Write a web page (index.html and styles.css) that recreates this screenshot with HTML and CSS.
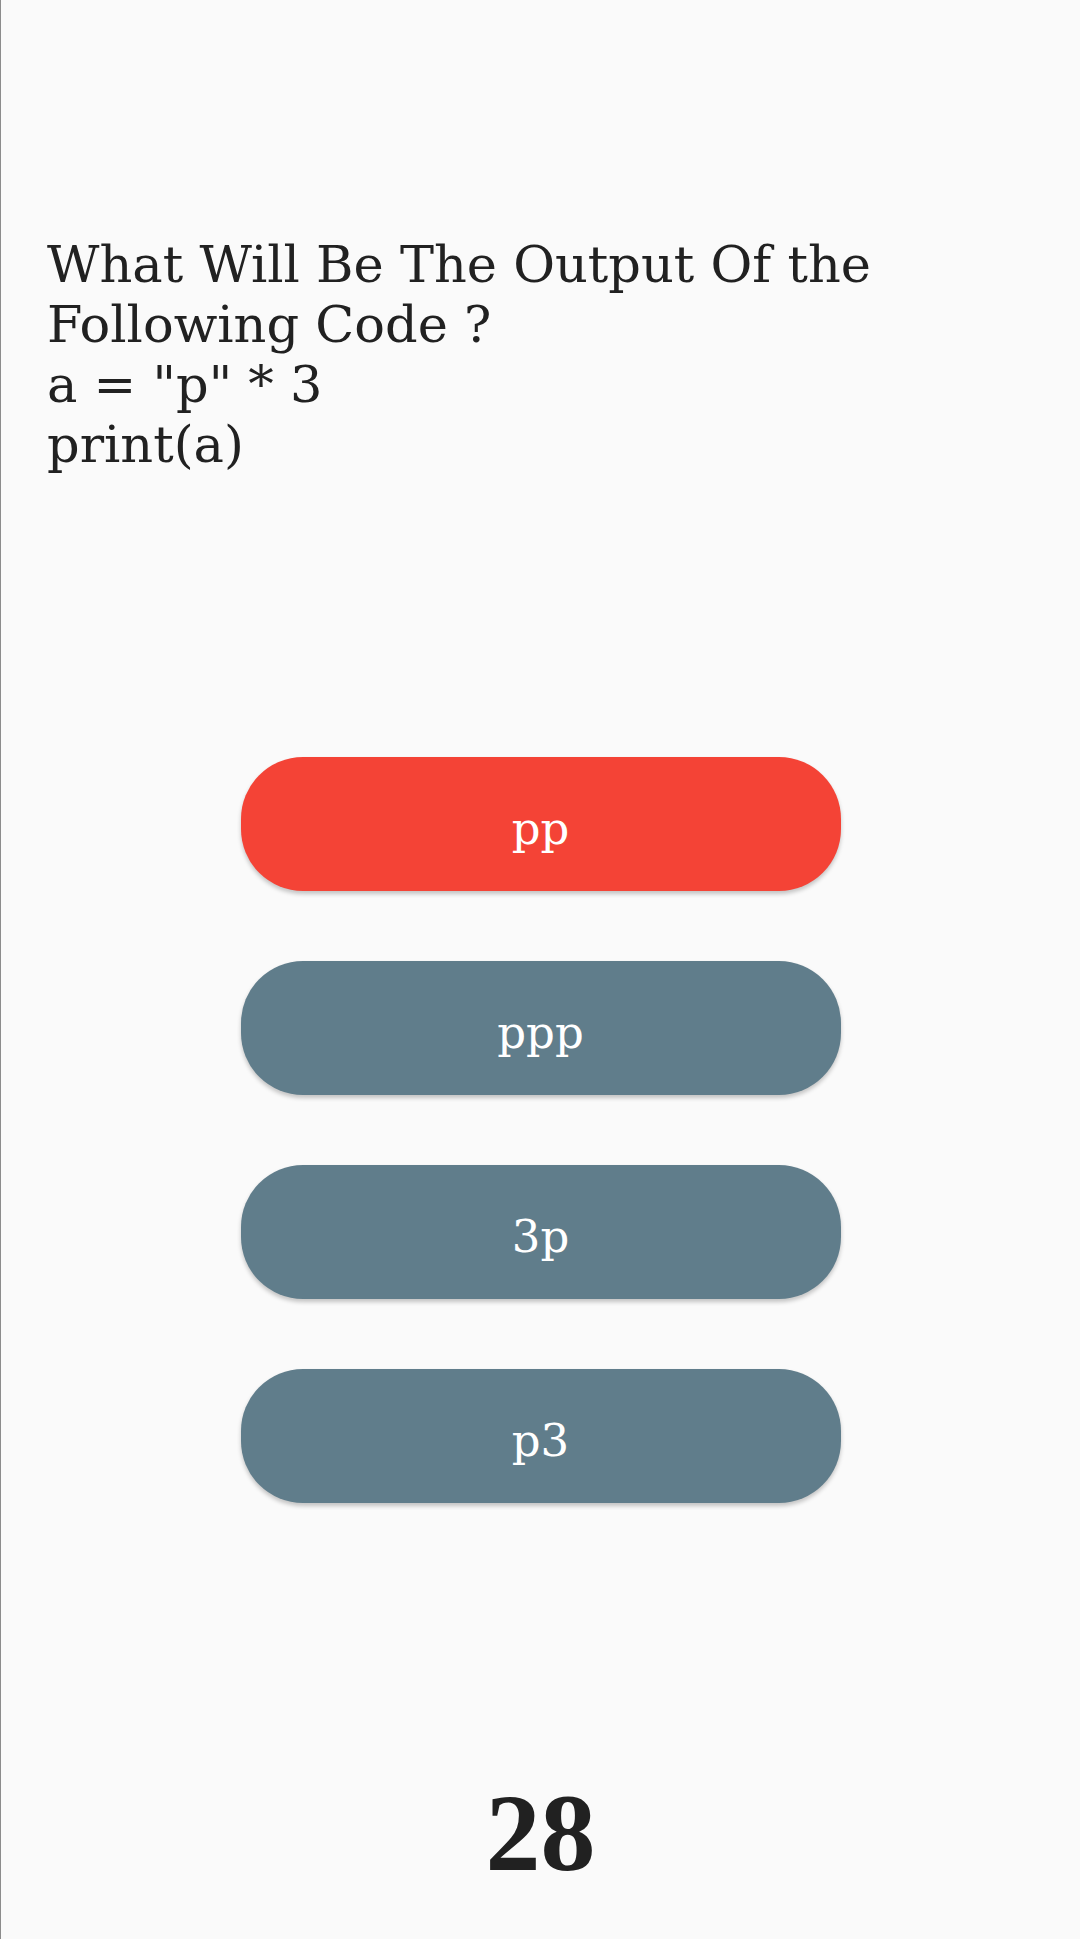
FILE: index.html
```html
<!DOCTYPE html>
<html>
<head>
<meta charset="utf-8">
<link rel="stylesheet" href="styles.css">
</head>
<body>
<div class="screen">
  <div class="question">What Will Be The Output Of the Following Code ?<br>a = "p" * 3<br>print(a)</div>
  <div class="options">
    <div class="option wrong">pp</div>
    <div class="option">ppp</div>
    <div class="option">3p</div>
    <div class="option">p3</div>
  </div>
  <div class="counter">28</div>
</div>
</body>
</html>
```
FILE: styles.css
```css
html, body {
  margin: 0;
  padding: 0;
  background: #fafafa;
}
.screen {
  box-sizing: border-box;
  width: 1080px;
  height: 1939px;
  border-left: 1px solid #8c8c8c;
  display: flex;
  flex-direction: column;
  align-items: stretch;
}
.question {
  margin-top: 235px;
  padding-left: 46px;
  padding-right: 40px;
  font-family: "DejaVu Serif", serif;
  font-size: 51px;
  line-height: 60px;
  color: #212121;
}
.options {
  margin-top: 282px;
  display: flex;
  flex-direction: column;
  align-items: center;
  gap: 70px;
}
.option {
  box-sizing: border-box;
  width: 600px;
  height: 134px;
  padding-top: 8px;
  border-radius: 62px;
  background: #607d8b;
  color: #ffffff;
  display: flex;
  align-items: center;
  justify-content: center;
  font-family: "DejaVu Serif", serif;
  font-size: 45px;
  box-shadow: 0 3px 4px rgba(0,0,0,0.22);
}
.option.wrong {
  background: #f44336;
}
.counter {
  margin-top: 275px;
  text-align: center;
  font-family: "Liberation Serif", serif;
  font-weight: bold;
  font-size: 110px;
  line-height: 111px;
  color: #212121;
}
```
